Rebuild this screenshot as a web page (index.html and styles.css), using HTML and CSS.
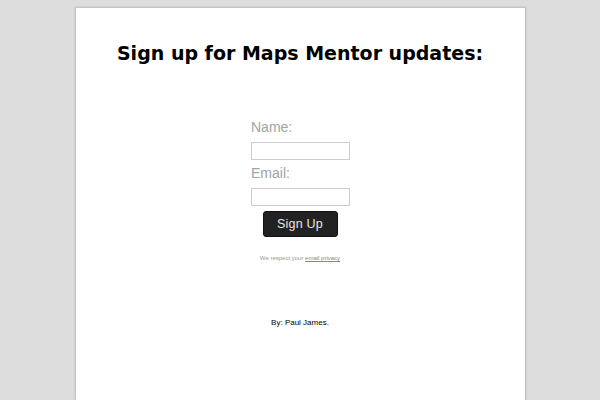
FILE: index.html
```html
<!DOCTYPE html>
<html>
<head>
<meta charset="utf-8">
<link rel="stylesheet" href="styles.css">
</head>
<body>
<div class="page">
  <h1 class="title">Sign up for Maps Mentor updates:</h1>
  <form class="signup">
    <label class="label">Name:</label>
    <input class="field" type="text">
    <label class="label">Email:</label>
    <input class="field" type="text">
    <button class="btn" type="button">Sign Up</button>
  </form>
  <p class="privacy">We respect your <a href="#">email privacy</a></p>
  <p class="byline">By: Paul James.</p>
</div>
</body>
</html>
```
FILE: styles.css
```css
html, body {
  margin: 0;
  padding: 0;
  background: #dddddd;
  height: 100%;
}
.page {
  box-sizing: border-box;
  width: 451px;
  margin: 7px auto 0;
  min-height: 393px;
  background: #ffffff;
  border: 1px solid #c4c4c4;
  border-bottom: none;
  box-shadow: 0 0 2px rgba(0,0,0,0.15);
  display: flex;
  flex-direction: column;
  align-items: center;
}
.title {
  font-family: "DejaVu Sans", sans-serif;
  font-weight: bold;
  font-size: 19px;
  color: #000;
  margin: 32px 0 0;
  line-height: 26px;
}
.signup {
  margin-top: 53px;
  width: 98px;
  display: flex;
  flex-direction: column;
  align-items: flex-start;
}
.label {
  font-family: "Liberation Sans", Arial, sans-serif;
  font-size: 14px;
  color: #a3a3a3;
  line-height: 16px;
  margin-bottom: 7px;
}
.field {
  box-sizing: border-box;
  width: 99px;
  height: 18px;
  margin: 0 0 5px;
  padding: 0;
  border: 1px solid #cccccc;
  background: #fff;
}
.btn {
  align-self: center;
  margin-top: 0;
  width: 75px;
  height: 26px;
  background: #222222;
  color: #e6e6e6;
  border: 1px solid #111;
  border-radius: 3px;
  font-family: "Liberation Sans", Arial, sans-serif;
  font-size: 12.5px;
  letter-spacing: 0.2px;
  padding: 0;
}
.privacy {
  font-family: "Liberation Sans", Arial, sans-serif;
  font-size: 6px;
  color: #999999;
  margin: 18px 0 0;
}
.privacy a {
  color: #888888;
}
.byline {
  font-family: "Liberation Sans", Arial, sans-serif;
  font-size: 8px;
  color: #000;
  margin: 57px 0 0;
}
```
